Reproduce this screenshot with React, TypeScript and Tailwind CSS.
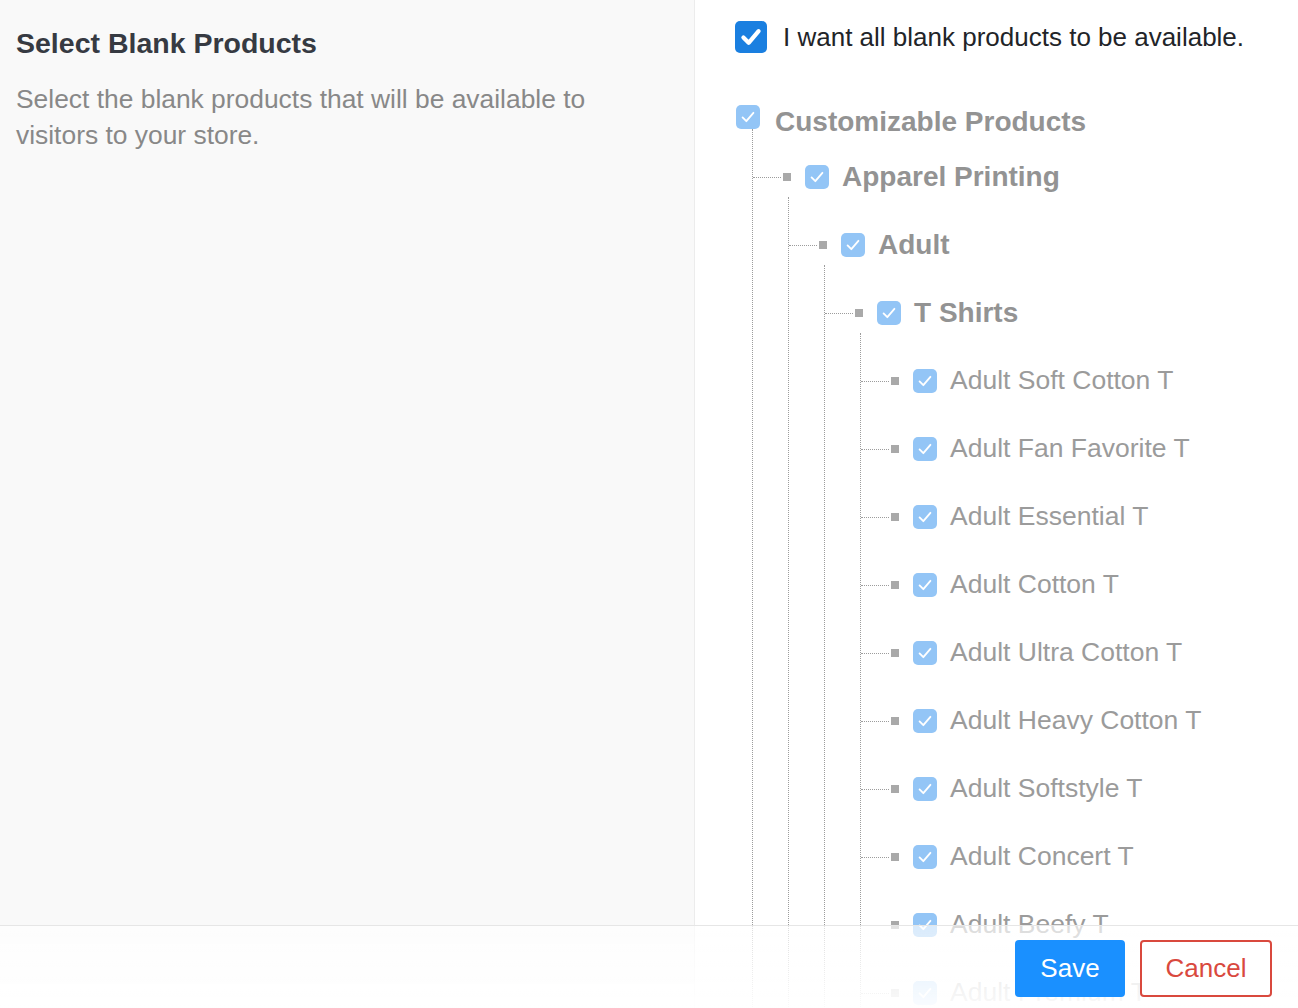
import React, { useState } from 'react';

type Node = {
    label: string;
    bold?: boolean;
    children?: Node[];
};

const tShirts = [
    'Adult Soft Cotton T',
    'Adult Fan Favorite T',
    'Adult Essential T',
    'Adult Cotton T',
    'Adult Ultra Cotton T',
    'Adult Heavy Cotton T',
    'Adult Softstyle T',
    'Adult Concert T',
    'Adult Beefy T',
    'Adult Premium T',
    'Adult Long Sleeve T',
];

const tree: Node = {
    label: 'Customizable Products',
    bold: true,
    children: [
        {
            label: 'Apparel Printing',
            bold: true,
            children: [
                {
                    label: 'Adult',
                    bold: true,
                    children: [
                        {
                            label: 'T Shirts',
                            bold: true,
                            children: tShirts.map(label => ({ label })),
                        },
                    ],
                },
            ],
        },
    ],
};

const Check = ({ size, stroke }: { size: number; stroke: number }) => (
    <svg width={size} height={size} viewBox="0 0 24 24" fill="none">
        <polyline points="5.5,12.5 10,17 18.5,7" stroke="white" strokeWidth={stroke} strokeLinecap="round" strokeLinejoin="round" />
    </svg>
);

const TreeBox = () => (
    <span className="flex h-6 w-6 shrink-0 items-center justify-center rounded-[5px] bg-[#93c5f6]">
        <Check size={20} stroke={2.2} />
    </span>
);

const Children = ({ nodes, offset }: { nodes: Node[]; offset: string }) => (
    <div className={`${offset} border-l border-dotted border-[#9c9c9c]`}>
        {nodes.map(node => (
            <TreeRow key={node.label} node={node} />
        ))}
    </div>
);

const TreeRow = ({ node }: { node: Node }) => (
    <div className="pt-[28px]">
        <div className="flex h-10 items-center">
            <span className="w-[28px] border-t border-dotted border-[#9c9c9c]" />
            <span className="ml-[2px] h-2 w-2 bg-[#a9a9a9]" />
            <span className="ml-[14px]"><TreeBox /></span>
            <span
                className={
                    node.bold
                        ? 'ml-[13px] whitespace-nowrap text-[28px] font-bold text-[#939393]'
                        : 'ml-[13px] whitespace-nowrap text-[26.5px] text-[#9b9b9b]'
                }
            >
                {node.label}
            </span>
        </div>
        {node.children && <Children nodes={node.children} offset="ml-[35px]" />}
    </div>
);

const App: React.FC = () => {
    const [allProducts, setAllProducts] = useState(true);

    return (
        <div className="flex h-screen overflow-hidden font-['Liberation_Sans',Arial,sans-serif]">
            <div className="w-[695px] shrink-0 border-r border-[#ececec] bg-[#f9f9f9] pl-4 pt-[27px]">
                <h2 className="text-[28.5px] font-bold leading-[32px] text-[#363a42]">Select Blank Products</h2>
                <p className="mt-[22px] w-[610px] text-[26.4px] leading-[36px] text-[#888888]">
                    Select the blank products that will be available to visitors to your store.
                </p>
            </div>

            <div className="flex-1 overflow-hidden bg-white pl-10 pt-[21px]">
                <label className="flex h-8 cursor-pointer items-center">
                    <button
                        type="button"
                        onClick={() => setAllProducts(!allProducts)}
                        className={
                            allProducts
                                ? 'flex h-8 w-8 items-center justify-center rounded-[5px] bg-[#1a7fe0]'
                                : 'flex h-8 w-8 items-center justify-center rounded-[5px] border-2 border-[#ccc] bg-white'
                        }
                    >
                        {allProducts && <Check size={28} stroke={3.6} />}
                    </button>
                    <span className="ml-4 whitespace-nowrap text-[26px] leading-[32px] text-[#222428]">
                        I want all blank products to be available.
                    </span>
                </label>

                <div className="mt-[52px] pl-px">
                    <div className="flex h-6 items-start">
                        <TreeBox />
                        <span className="ml-[15px] -mt-px whitespace-nowrap text-[28px] font-bold leading-[36px] text-[#939393]">
                            {tree.label}
                        </span>
                    </div>
                    <Children nodes={tree.children!} offset="ml-4" />
                </div>
            </div>

            <div className="fixed bottom-0 left-0 right-0 flex h-[83px] items-start justify-end gap-[15px] border-t border-[#e6e6e6] bg-linear-to-b from-white/65 to-white/95 pr-[26px] pt-[14px]">
                <button className="h-[57px] w-[110px] rounded-[4px] bg-[#1a90ff] text-[26px] text-white">Save</button>
                <button className="h-[57px] w-[132px] rounded-[4px] border-2 border-[#d9493e] bg-white text-[26px] text-[#d9493e]">
                    Cancel
                </button>
            </div>
        </div>
    );
};

export default App;
